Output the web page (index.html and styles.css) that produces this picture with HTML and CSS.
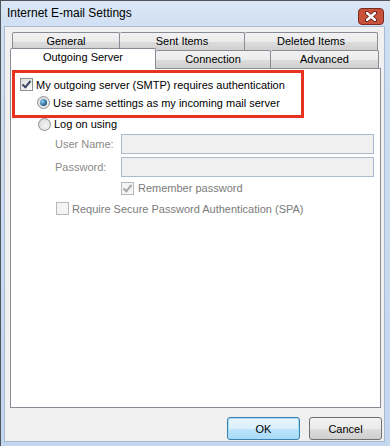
FILE: index.html
```html
<!DOCTYPE html>
<html lang="en">
<head>
    <meta charset="UTF-8">
    <title>Internet E-mail Settings</title>
    <link rel="stylesheet" href="styles.css">
</head>
<body>
    <div class="window">
        <div class="titlebar">
            <span class="title">Internet E-mail Settings</span>
            <div class="closebox">
                <svg class="close-x" width="16" height="11" viewBox="0 0 16 11">
                    <path d="M4 2 L12 9 M12 2 L4 9" stroke="#5e1f17" stroke-width="4.2" stroke-linecap="round"/>
                    <path d="M4 2 L12 9 M12 2 L4 9" stroke="#ffffff" stroke-width="2.4" stroke-linecap="round"/>
                </svg>
            </div>
        </div>

        <div class="client">
            <div class="tabs">
                <div class="tab-row back">
                    <div class="tab t-general">General</div>
                    <div class="tab t-sent">Sent Items</div>
                    <div class="tab t-deleted">Deleted Items</div>
                </div>
                <div class="tab-row front">
                    <div class="tab selected t-outgoing">Outgoing Server</div>
                    <div class="tab t-connection">Connection</div>
                    <div class="tab t-advanced">Advanced</div>
                </div>
            </div>

            <div class="panel">
                <div class="highlight">
                    <div class="row row-auth">
                        <span class="check checked"></span>
                        <span>My outgoing server (SMTP) requires authentication</span>
                    </div>
                    <div class="row row-same">
                        <span class="radio on"></span>
                        <span>Use same settings as my incoming mail server</span>
                    </div>
                </div>

                <div class="row row-logon">
                    <span class="radio"></span>
                    <span>Log on using</span>
                </div>

                <div class="row field row-user">
                    <label class="field-label">User Name:</label>
                    <span class="input"></span>
                </div>
                <div class="row field row-pass">
                    <label class="field-label">Password:</label>
                    <span class="input"></span>
                </div>

                <div class="row row-remember disabled">
                    <span class="check checked off"></span>
                    <span>Remember password</span>
                </div>
                <div class="row row-spa disabled">
                    <span class="check off"></span>
                    <span>Require Secure Password Authentication (SPA)</span>
                </div>
            </div>

            <div class="buttons">
                <button class="btn default">OK</button>
                <button class="btn">Cancel</button>
            </div>
        </div>
    </div>
</body>
</html>
```

FILE: styles.css
```css
body {
    margin: 0;
    font-family: "Liberation Sans", Arial, sans-serif;
    font-size: 11px;
    color: #000;
    white-space: nowrap;
}

.window {
    width: 389px;
    height: 445px;
    border-top: 1px solid #50555c;
    border-left: 1px solid #50555c;
    background: linear-gradient(to bottom, #dbe7f5 0px, #cfdff2 26px, #c2d6ee 100%);
    display: flex;
    flex-direction: column;
}

.titlebar {
    height: 25px;
    display: flex;
    align-items: flex-start;
    padding: 0 6px;
}

.title {
    flex: 1;
    font-size: 12px;
    color: #000;
    padding-top: 5px;
}

.closebox {
    flex: 0 0 26px;
    height: 17px;
    margin-top: 7px;
    box-sizing: border-box;
    border: 1px solid #7a2b20;
    border-radius: 4px;
    background: #c9523a;
    text-align: center;
    line-height: 0;
}

.close-x {
    margin-top: 2px;
}

.client {
    flex: 1;
    margin: 0 5px 4px 3px;
    background: #f0f0f0;
    border: 1px solid #a9bad0;
    padding-left: 5px;
}

/* tabs */

.tabs {
    padding-top: 5px;
    width: 371px;
}

.tab-row {
    display: flex;
    height: 18px;
}

.tab-row.back {
    padding-left: 2px;
}

.tab {
    box-sizing: border-box;
    height: 18px;
    border: 1px solid #898c95;
    border-bottom: none;
    border-radius: 2px 2px 0 0;
    background: linear-gradient(#f2f2f2 0%, #ebebeb 50%, #dddddd 51%, #cfcfcf 100%);
    text-align: center;
    line-height: 17px;
    color: #000;
}

.tab + .tab {
    border-left: none;
}

.t-general { width: 108px; }
.t-sent { width: 125px; }
.t-deleted { width: 133px; }

.t-outgoing { width: 146px; }
.t-connection { width: 115px; }
.t-advanced { width: 108px; }

.tab.selected {
    background: #ffffff;
    height: 21px;
    margin-top: -2px;
    margin-bottom: -1px;
    position: relative;
    z-index: 1;
}

/* panel */

.panel {
    box-sizing: border-box;
    width: 371px;
    height: 340px;
    background: #ffffff;
    border: 1px solid #898c95;
    padding: 1px 0 0 1px;
}

.highlight {
    width: 286px;
    height: 39px;
    border: 3px solid #e8321f;
    padding-top: 3px;
}

.row {
    display: flex;
    align-items: center;
}

.row-auth {
    height: 17px;
    padding-left: 5px;
}

.row-same {
    height: 17px;
    padding-left: 22px;
    margin-top: 1px;
}

.row-logon {
    height: 12px;
    padding-left: 26px;
}

.check {
    width: 11px;
    height: 11px;
    border: 1px solid #8f8f8f;
    background: linear-gradient(135deg, #dcdcdc, #fbfbfb);
    margin-right: 3px;
    position: relative;
    flex: none;
}

.check.checked::after {
    content: "";
    position: absolute;
    left: 3px;
    top: 0;
    width: 3px;
    height: 7px;
    border-right: 2px solid #3c4a68;
    border-bottom: 2px solid #3c4a68;
    transform: rotate(40deg);
}

.check.off {
    border-color: #b8b8b8;
    background: #f4f4f4;
}

.check.checked.off::after {
    border-color: #a8a8a8;
}

.radio {
    width: 11px;
    height: 11px;
    border: 1px solid #8e8f8f;
    border-radius: 50%;
    background: radial-gradient(circle at 60% 60%, #f6f6f6, #d4d4d4);
    margin-right: 3px;
    position: relative;
    flex: none;
}

.radio.on::after {
    content: "";
    position: absolute;
    left: 2px;
    top: 2px;
    width: 7px;
    height: 7px;
    border-radius: 50%;
    background: radial-gradient(circle at 35% 35%, #8fd0f5, #1b5a8c 70%);
}

.field {
    height: 20px;
    padding-left: 43px;
}

.row-user {
    margin-top: 4px;
}

.row-pass {
    margin-top: 3px;
}

.field-label {
    width: 66px;
    color: #8a8a8a;
}

.input {
    box-sizing: border-box;
    width: 253px;
    height: 20px;
    border: 1px solid #abbad0;
    background: #f0f0f0;
}

.disabled {
    color: #7b7b7b;
}

.row-remember {
    height: 16px;
    margin-top: 3px;
    padding-left: 109px;
}

.row-remember .check {
    margin-right: 4px;
}

.row-spa {
    height: 17px;
    margin-top: 4px;
    padding-left: 44px;
}

/* buttons */

.buttons {
    display: flex;
    justify-content: flex-end;
    gap: 9px;
    padding: 9px 2px 0 0;
}

.btn {
    box-sizing: border-box;
    width: 73px;
    height: 23px;
    font-family: inherit;
    font-size: 11px;
    color: #000;
    border: 1px solid #707070;
    border-radius: 3px;
    background: linear-gradient(#f2f2f2 0%, #ebebeb 50%, #dddddd 51%, #cfcfcf 100%);
    padding: 0;
}

.btn.default {
    border-color: #3c7fb1;
    box-shadow: inset 0 0 0 1px #a6dcf5;
    background: linear-gradient(#eaf6fd 0%, #d9f0fc 50%, #bee6fd 51%, #a7d9f5 100%);
}
```
